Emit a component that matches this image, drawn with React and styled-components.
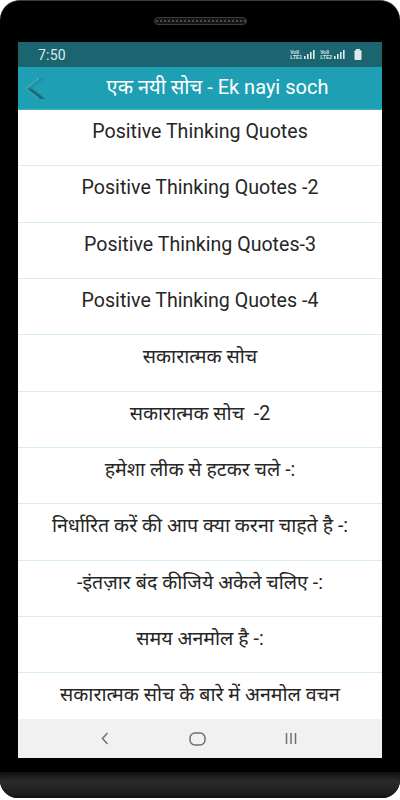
import React from "react";
import styled, { createGlobalStyle } from "styled-components";

const Global = createGlobalStyle`
  html, body { margin: 0; padding: 0; background: #ffffff; }
  body { font-family: Roboto, "Noto Sans Devanagari", "Lohit Devanagari", "Noto Sans", sans-serif; }
  * { box-sizing: border-box; }
`;

const Phone = styled.div`
  width: 400px;
  height: 798px;
  background: #000;
  border-radius: 20px 20px 18px 18px;
  border-top: 1px solid #3c3c3c;
  display: flex;
  flex-direction: column;
  align-items: center;
  padding-top: 16px;
  overflow: hidden;
`;

const Speaker = styled.div`
  width: 93px;
  height: 8px;
  border-radius: 4px;
  border: 1px solid #3d3d3d;
  background: radial-gradient(circle, #4a4a4a 0.8px, #161616 1.2px) 0 0 / 4px 6px;
  margin-bottom: 17px;
`;

const Screen = styled.div`
  width: 364px;
  height: 716px;
  display: flex;
  flex-direction: column;
  background: #fff;
  overflow: hidden;
`;

const StatusBar = styled.div`
  height: 25px;
  flex: none;
  background: #1b6571;
  display: flex;
  align-items: center;
  padding: 0 17px 0 20px;
  color: #dfe9eb;
`;

const Time = styled.span`
  font-size: 14px;
  flex: 1;
  letter-spacing: 0.2px;
`;

const StatusIcons = styled.div`
  display: flex;
  align-items: center;
  gap: 2px;
`;

const SimTag = styled.span`
  display: flex;
  flex-direction: column;
  font-size: 5px;
  line-height: 5px;
  font-weight: 700;
  color: #dfe9eb;
  margin-left: ${(p) => (p.$gap ? "3px" : "0")};
  font-family: "Liberation Sans", Arial, sans-serif;
`;

const Battery = styled.svg`
  margin-left: 4px;
`;

const AppBar = styled.div`
  height: 43px;
  flex: none;
  background: #1f9fb4;
  display: flex;
  align-items: center;
  border-bottom: 1px solid #3fb1c2;
`;

const BackButton = styled.div`
  width: 37px;
  display: flex;
  justify-content: flex-start;
  padding-left: 7px;
`;

const Title = styled.h1`
  flex: 1;
  margin: 0;
  text-align: center;
  color: #ffffff;
  font-size: 20px;
  font-weight: 400;
  padding-right: 2px;
`;

const List = styled.div`
  flex: 1;
  overflow: hidden;
`;

const Row = styled.div`
  height: 56.33px;
  border-bottom: 1.5px solid #d6eef3;
  padding-top: 10px;
  text-align: center;
  font-size: 19.6px;
  line-height: 24px;
  color: #262626;
  white-space: pre;
`;

const NavBar = styled.div`
  height: 39px;
  flex: none;
  background: #f1f1f1;
  display: flex;
  align-items: center;
  justify-content: space-around;
  padding: 0 44px 0 40px;
`;

const NavBtn = styled.div`
  width: 40px;
  display: flex;
  justify-content: center;
`;

const Spacer = styled.div`
  height: 14px;
  flex: none;
`;

const Chin = styled.div`
  width: 100%;
  flex: 1;
  background: linear-gradient(#0e0e0e, #2a2a2a 35%, #1e1e1e 80%, #141414);
`;

const Signal = () => (
  <svg width="11" height="9" viewBox="0 0 11 9">
    <rect x="0" y="6" width="1.6" height="3" fill="#dfe9eb" />
    <rect x="3" y="4" width="1.6" height="5" fill="#dfe9eb" />
    <rect x="6" y="2" width="1.6" height="7" fill="#dfe9eb" />
    <rect x="9" y="0" width="1.6" height="9" fill="#dfe9eb" />
  </svg>
);

const items = [
  "Positive Thinking Quotes",
  "Positive Thinking Quotes -2",
  "Positive Thinking Quotes-3",
  "Positive Thinking Quotes -4",
  "सकारात्मक सोच",
  "सकारात्मक सोच  -2",
  "हमेशा लीक से हटकर चले -:",
  "निर्धारित करें की आप क्या करना चाहते है -:",
  "-इंतज़ार बंद कीजिये अकेले चलिए -:",
  "समय अनमोल है -:",
  "सकारात्मक सोच के बारे में अनमोल वचन",
];

export default function App() {
  return (
    <>
      <Global />
      <Phone>
        <Speaker />
        <Screen>
          <StatusBar>
            <Time>7:50</Time>
            <StatusIcons>
              <SimTag><span>Vo0</span><span>LTE1</span></SimTag>
              <Signal />
              <SimTag $gap><span>Vo0</span><span>LTE2</span></SimTag>
              <Signal />
              <Battery width="14" height="11" viewBox="0 0 14 11">
                <rect x="5" y="0" width="4" height="1.5" fill="#dfe9eb" />
                <rect x="3.5" y="1.2" width="7" height="9.8" rx="1" fill="#dfe9eb" />
              </Battery>
            </StatusIcons>
          </StatusBar>
          <AppBar>
            <BackButton>
              <svg width="21" height="21" viewBox="0 0 21 21">
                <polygon points="0,10.5 14,0 20.5,0 7,10.5" fill="#1c93a6" />
                <polygon points="0,10.5 7,10.5 20.5,21 14,21" fill="#16717f" />
                <polyline points="14,0.4 0.6,10.5 14,20.6" fill="none" stroke="#4fbccb" strokeWidth="1" />
              </svg>
            </BackButton>
            <Title>एक नयी सोच - Ek nayi soch</Title>
          </AppBar>
          <List>
            {items.map((t, i) => (
              <Row key={i}>{t}</Row>
            ))}
          </List>
          <NavBar>
            <NavBtn>
              <svg width="8" height="13" viewBox="0 0 8 13">
                <polyline points="6.5,1 1.5,6.5 6.5,12" fill="none" stroke="#6f6f6f" strokeWidth="1.5" />
              </svg>
            </NavBtn>
            <NavBtn>
              <svg width="17" height="14" viewBox="0 0 17 14">
                <rect x="1" y="1" width="15" height="12" rx="5" fill="none" stroke="#6f6f6f" strokeWidth="1.5" />
              </svg>
            </NavBtn>
            <NavBtn>
              <svg width="12" height="13" viewBox="0 0 12 13">
                <line x1="1.5" y1="1" x2="1.5" y2="12" stroke="#6f6f6f" strokeWidth="1.5" />
                <line x1="6" y1="1" x2="6" y2="12" stroke="#6f6f6f" strokeWidth="1.5" />
                <line x1="10.5" y1="1" x2="10.5" y2="12" stroke="#6f6f6f" strokeWidth="1.5" />
              </svg>
            </NavBtn>
          </NavBar>
        </Screen>
        <Spacer />
        <Chin />
      </Phone>
    </>
  );
}
